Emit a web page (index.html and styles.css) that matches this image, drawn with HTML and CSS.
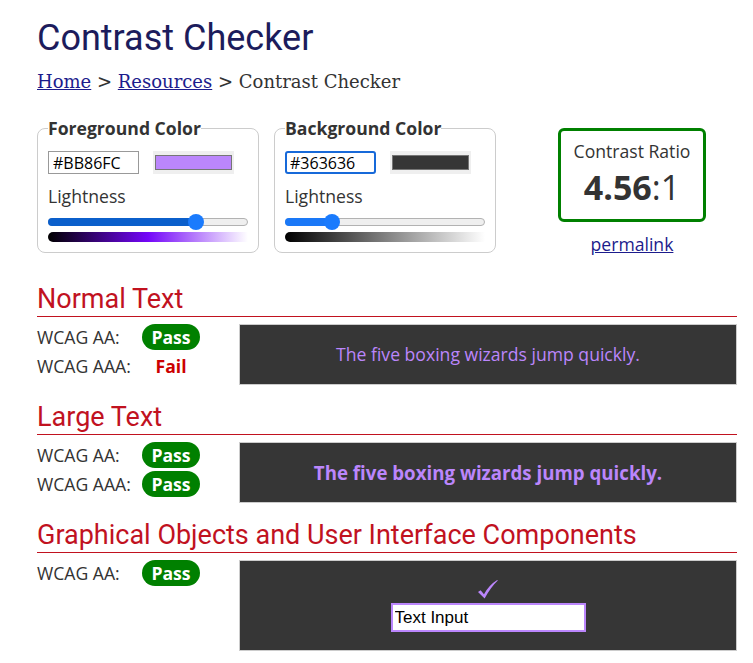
FILE: index.html
```html
<!DOCTYPE html>
<html lang="en">
  <head>
    <meta charset="UTF-8" />
    <meta name="viewport" content="width=device-width, initial-scale=1" />
    <title>Contrast Checker</title>
    <link rel="stylesheet" href="styles.css">
  </head>
  <body>
    <div class="page">
      <h1 class="title">Contrast Checker</h1>
      <nav class="crumbs">
        <a href="#">Home</a> &gt; <a href="#">Resources</a> &gt; Contrast Checker
      </nav>

      <!-- Вибір кольорів -->
      <div class="picker-row">
        <fieldset class="picker">
          <legend>Foreground Color</legend>
          <div class="picker-top">
            <input class="hex" type="text" value="#BB86FC" aria-label="Foreground hex" />
            <span class="swatch"><span class="swatch-color" style="background: #bb86fc"></span></span>
          </div>
          <div class="picker-label">Lightness</div>
          <div class="slider">
            <div class="slider-track">
              <div class="slider-fill slider-fill-dark" style="width: 148px"></div>
            </div>
            <div class="slider-thumb" style="left: 140px"></div>
          </div>
          <div class="lightness-bar lightness-fg"></div>
        </fieldset>

        <fieldset class="picker">
          <legend>Background Color</legend>
          <div class="picker-top">
            <input class="hex hex-focus" type="text" value="#363636" aria-label="Background hex" />
            <span class="swatch"><span class="swatch-color" style="background: #363636"></span></span>
          </div>
          <div class="picker-label">Lightness</div>
          <div class="slider">
            <div class="slider-track">
              <div class="slider-fill" style="width: 47px"></div>
            </div>
            <div class="slider-thumb" style="left: 39px"></div>
          </div>
          <div class="lightness-bar lightness-bg"></div>
        </fieldset>

        <div class="result">
          <div class="ratio-box">
            <div class="ratio-label">Contrast Ratio</div>
            <div class="ratio-value"><b>4.56</b>:1</div>
          </div>
          <a href="#" class="permalink">permalink</a>
        </div>
      </div>

      <!-- Звичайний текст -->
      <h2 class="section-title">Normal Text</h2>
      <div class="check">
        <div class="check-rows">
          <div class="check-row"><span class="check-name">WCAG AA:</span><span class="badge pass">Pass</span></div>
          <div class="check-row"><span class="check-name">WCAG AAA:</span><span class="badge fail">Fail</span></div>
        </div>
        <div class="sample sample-normal">The five boxing wizards jump quickly.</div>
      </div>

      <!-- Великий текст -->
      <h2 class="section-title">Large Text</h2>
      <div class="check">
        <div class="check-rows">
          <div class="check-row"><span class="check-name">WCAG AA:</span><span class="badge pass">Pass</span></div>
          <div class="check-row"><span class="check-name">WCAG AAA:</span><span class="badge pass">Pass</span></div>
        </div>
        <div class="sample sample-large">The five boxing wizards jump quickly.</div>
      </div>

      <!-- Графічні об'єкти -->
      <h2 class="section-title">Graphical Objects and User Interface Components</h2>
      <div class="check">
        <div class="check-rows">
          <div class="check-row"><span class="check-name">WCAG AA:</span><span class="badge pass">Pass</span></div>
        </div>
        <div class="sample sample-ui">
          <svg class="tick" width="20" height="19" viewBox="0 0 20 19" aria-hidden="true">
            <path d="M0 12 L2.6 10.2 L6 14.2 Q11 5 19.2 0 L19.8 0.6 Q12.5 7.5 6.6 18.6 Z" fill="#bb86fc" />
          </svg>
          <input class="ui-input" type="text" value="Text Input" aria-label="Text Input" />
        </div>
      </div>
    </div>
  </body>
</html>
```

FILE: styles.css
```css
/* Сторінка */
body {
  margin: 0;
  background: #fff;
  color: #333;
  font-family: "Open Sans", sans-serif;
  font-size: 17.6px;
}
.page {
  width: 700px;
  padding: 17px 0 0 37px;
}

/* Заголовок */
.title {
  margin: 0;
  font-family: Roboto, sans-serif;
  font-weight: 400;
  font-size: 36px;
  color: #1c1c5c;
}

/* Хлібні крихти */
.crumbs {
  margin-top: 12px;
  font-family: "DejaVu Serif", serif;
  font-size: 18px;
  color: #333;
}
.crumbs a {
  color: #1c1c8c;
}

/* Рядок з полями кольорів */
.picker-row {
  display: flex;
  align-items: flex-start;
  gap: 15px;
  margin-top: 24px;
}
.picker {
  width: 200px;
  margin: 0;
  padding: 11px 10px 10px;
  border: 1px solid #ccc;
  border-radius: 8px;
}
.picker legend {
  padding: 0;
  font-weight: 700;
  line-height: 24px;
  color: #333;
}
.picker-top {
  display: flex;
  align-items: center;
  gap: 14px;
}
.hex {
  width: 91px;
  height: 23px;
  box-sizing: border-box;
  margin: 0;
  padding: 0 4px;
  border: 1px solid #999;
  font-family: "Open Sans", sans-serif;
  font-size: 16px;
  color: #000;
}
.hex-focus {
  border: 2px solid #1769d9;
  border-radius: 3px;
  padding: 0 3px;
  outline: none;
}
.swatch {
  display: block;
  padding: 4px 2px;
  background: #efefef;
}
.swatch-color {
  display: block;
  width: 77px;
  height: 15px;
  box-sizing: border-box;
  border: 1px solid #767676;
}
.picker-label {
  margin-top: 10px;
  line-height: 24px;
}

/* Повзунок */
.slider {
  position: relative;
  height: 16px;
  margin-top: 6px;
}
.slider-track {
  position: relative;
  height: 8px;
  top: 4px;
  box-sizing: border-box;
  background: #efefef;
  border: 1px solid #b2b2b2;
  border-radius: 4px;
}
.slider-fill {
  position: absolute;
  top: -1px;
  left: -1px;
  height: 8px;
  border-radius: 4px;
  background: #1a78f7;
}
.slider-fill-dark {
  background: #0b5fcb;
}
.slider-thumb {
  position: absolute;
  top: 0;
  width: 16px;
  height: 16px;
  border-radius: 50%;
  background: #1a7bfd;
}
.lightness-bar {
  height: 10px;
  margin-top: 2px;
  border-radius: 5px 0 0 5px;
}
.lightness-fg {
  background: linear-gradient(to right, #000, hsl(267, 95%, 50%), #fff);
}
.lightness-bg {
  background: linear-gradient(to right, #000, #808080, #fff);
}

/* Результат */
.result {
  display: flex;
  flex-direction: column;
  align-items: center;
  margin: 12px 0 0 47px;
}
.ratio-box {
  width: 148px;
  box-sizing: border-box;
  padding: 8px 0 9px;
  border: 3px solid #008000;
  border-radius: 6px;
  text-align: center;
}
.ratio-label {
  line-height: 24px;
}
.ratio-value {
  margin-top: 1px;
  font-size: 34px;
  line-height: 46px;
}
.permalink {
  margin-top: 10px;
  line-height: 24px;
  color: #1c1c8c;
}

/* Секції */
.section-title {
  margin: 28px 0 0;
  padding-bottom: 1px;
  border-bottom: 1px solid #c1121f;
  font-family: Roboto, sans-serif;
  font-weight: 400;
  font-size: 27px;
  line-height: 31px;
  color: #c1121f;
}
.check + .section-title {
  margin-top: 17px;
}
.check {
  display: grid;
  grid-template-columns: 202px 1fr;
  margin-top: 7px;
}
.check-row {
  display: flex;
  align-items: flex-start;
  height: 29px;
}
.check-name {
  width: 105px;
  margin-top: 1px;
  line-height: 24px;
}
.badge {
  width: 58px;
  line-height: 26px;
  border-radius: 13px;
  font-weight: 700;
  text-align: center;
}
.pass {
  background: #008000;
  color: #fff;
}
.fail {
  color: #cc0000;
}

/* Зразки */
.sample {
  border: 1px solid #ccc;
  background: #363636;
  color: #bb86fc;
  text-align: center;
}
.sample-normal {
  padding: 18px 10px;
  line-height: 23px;
}
.sample-large {
  padding: 17px 10px;
  font-size: 18.7px;
  font-weight: 700;
  line-height: 25px;
}
.sample-ui {
  display: flex;
  flex-direction: column;
  align-items: center;
  padding: 19px 0 18px;
}
.tick {
  display: block;
  margin-bottom: 4px;
}
.ui-input {
  width: 195px;
  height: 29px;
  box-sizing: border-box;
  margin: 0;
  padding: 0 2px;
  border: 2px solid #bb86fc;
  background: #fff;
  font-family: "Liberation Sans", Arial, sans-serif;
  font-size: 17px;
  color: #000;
}
```
